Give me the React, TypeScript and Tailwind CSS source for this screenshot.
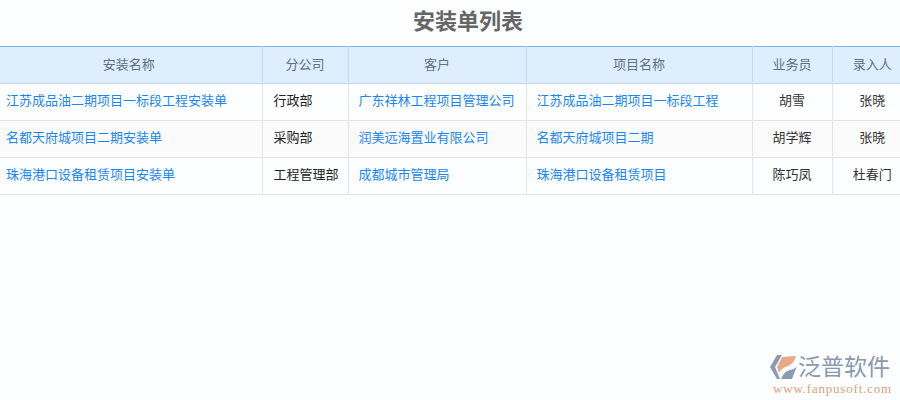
const cjk = "font-['Liberation_Sans','Noto_Sans_CJK_SC',sans-serif]";

const rows = [
  ["江苏成品油二期项目一标段工程安装单", "行政部", "广东祥林工程项目管理公司", "江苏成品油二期项目一标段工程", "胡雪", "张晓"],
  ["名都天府城项目二期安装单", "采购部", "润美远海置业有限公司", "名都天府城项目二期", "胡学辉", "张晓"],
  ["珠海港口设备租赁项目安装单", "工程管理部", "成都城市管理局", "珠海港口设备租赁项目", "陈巧凤", "杜春门"],
];
const heads = ["安装名称", "分公司", "客户", "项目名称", "业务员", "录入人"];
const cols = ["w-[262px]", "w-[86px]", "w-[178px]", "w-[226px]", "w-[80px]", "w-[80px]"];

export default function App() {
  return (
    <div className={`relative h-[400px] w-[900px] overflow-hidden bg-[#fdfeff] ${cjk}`}>
      <h1 className="flex h-[46px] w-[936px] items-center justify-center pb-[4px] text-[22px] font-bold text-[#666666]">安装单列表</h1>
      <table className="w-[912px] max-w-none table-fixed border-collapse text-[13px] leading-[20px]">
        <colgroup>
          {cols.map((c) => (
            <col key={c} className={c} />
          ))}
        </colgroup>
        <thead>
          <tr className="h-[37px] bg-[#deeefc]">
            {heads.map((h, i) => (
              <th
                key={h}
                className={`border-t border-b border-t-[#7ab8ec] border-b-[#c5dcf0] p-0 text-center font-normal text-[#5b7186] ${i < 5 ? "border-r border-r-[#c5dcf0]" : ""} ${i === 0 ? "pr-[4px]" : ""}`}
              >
                {h}
              </th>
            ))}
          </tr>
        </thead>
        <tbody>
          {rows.map((r, ri) => (
            <tr key={r[0]} className={`h-[37px] ${ri === 1 ? "bg-[#fcfbfc]" : ""}`}>
              {r.map((t, i) => {
                const link = i === 0 || i === 2 || i === 3;
                const pad = i === 0 ? "pl-[6px]" : i === 1 ? "pl-[11px]" : "pl-[10px]";
                return (
                  <td
                    key={i}
                    className={`whitespace-nowrap border-b border-b-[#e4e4e4] p-0 pb-[2px] ${i < 5 ? "border-r border-r-[#e4e4e4]" : ""} ${
                      link ? `text-left text-[#1a86f2] ${pad}` : i === 1 ? `text-left text-[#222222] ${pad}` : "text-center text-[#333333]"
                    }`}
                  >
                    {t}
                  </td>
                );
              })}
            </tr>
          ))}
        </tbody>
      </table>
      <div className="absolute left-[770px] top-[354px] flex w-[125px] flex-col">
        <div className="flex items-center">
          <svg width="28" height="26" viewBox="0 0 28 26" className="shrink-0">
            <path d="M7 1 L12 1 L5 13 L10 25 L7 25 L0 13 Z" fill="#8b9bb4" />
            <path d="M12 3 L26 2 Q24 11 15 13 Q11 15 9 19 L7 13 Z" fill="#e8a988" />
            <path d="M11 25 Q14 17 20 16 Q25 15 27 12 L22 25 Z" fill="#8b9bb4" />
          </svg>
          <span className="whitespace-nowrap text-[23px] leading-[26px] text-[#8a99ad]">泛普软件</span>
        </div>
        <span className="mt-[2px] ml-[3px] whitespace-nowrap font-['Liberation_Serif',serif] text-[13px] leading-[14px] tracking-[0.8px] text-[#e0a07c]">www.fanpusoft.com</span>
      </div>
    </div>
  );
}
